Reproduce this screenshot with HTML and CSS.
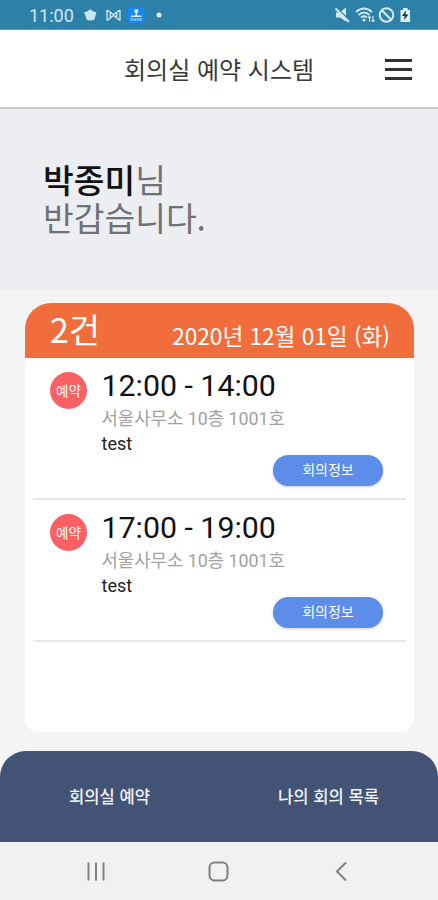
FILE: index.html
```html
<!DOCTYPE html>
<html lang="ko">
<head>
<meta charset="utf-8">
<title>회의실 예약 시스템</title>
<link rel="stylesheet" href="styles.css">
</head>
<body>
<div class="phone">
  <div class="status">
    <span class="clock">11:00</span>
    <svg class="status-left" width="80" height="18" viewBox="0 0 80 18">
      <path d="M7 3 L9.500 5 L13.500 6.500 L12.500 9.500 L11.500 13.500 Q7 15.500 3.500 13.500 L2.500 9.500 L1 6.500 L5 5Z" fill="#c9e6f1"/>
      <path d="M24 4 V14.500 M37 4 V14.500 M24 4 L30.500 8.500 L37 4 M24 14.500 L30.500 9.500 L37 14.500 M27.300 6.500 V12 M33.700 6.500 V12" fill="none" stroke="#c9e6f1" stroke-width="1.400"/>
      <rect x="45" y="1" width="16.500" height="16" rx="3" fill="#1688f5"/>
      <circle cx="53.300" cy="5" r="2.100" fill="#d8f0ff"/>
      <path d="M53.300 6 V9.500 M48 10.300 H58.500" stroke="#d8f0ff" stroke-width="1.500"/>
      <path d="M47.500 13.500 H59" stroke="#7cc4ff" stroke-width="2.500" stroke-dasharray="2.500 .5"/>
      <circle cx="76" cy="9" r="2.500" fill="#e2f2f8"/>
    </svg>
    <svg class="status-right" width="80" height="18" viewBox="0 0 80 18">
      <path d="M2 6.500 H5.500 L12 1.500 V15.500 L6 11.500 H2Z" fill="#d3eaf3"/>
      <path d="M2.500 1.500 L16 15" stroke="#2d80a7" stroke-width="1.500"/>
      <path d="M1.500 2.500 L15 16" stroke="#d3eaf3" stroke-width="1.900"/>
      <path d="M22 6 Q30 -1 38 6 M24.500 9 Q30 4 35.500 9 M27 11.500 Q30 9 33 11.500" fill="none" stroke="#d3eaf3" stroke-width="1.800"/>
      <circle cx="30" cy="14" r="1.500" fill="#d3eaf3"/>
      <path d="M35.500 16 V10.500 M34 12 L35.500 10.300 L37 12 M39 10 V15.500 M37.500 14 L39 15.700 L40.500 14" fill="none" stroke="#d3eaf3" stroke-width="1.100"/>
      <circle cx="52.500" cy="9" r="6.800" fill="none" stroke="#d3eaf3" stroke-width="2"/>
      <path d="M47.800 4.300 L57.200 13.700" stroke="#d3eaf3" stroke-width="2"/>
      <path d="M66.500 4 H69 V2 H73.500 V4 H76 V16 H66.500Z" fill="#dceff5"/>
      <path d="M72 4.500 L68 10 H70.700 L70 14 L74.500 8.500 H71.700Z" fill="#183642"/>
    </svg>
  </div>
  <header class="header">
    <h1 class="title">회의실 예약 시스템</h1>
    <div class="menu"><i></i><i></i><i></i></div>
  </header>
  <section class="greeting"><p><b>박종미</b>님</p><p>반갑습니다.</p></section>
  <main class="main">
    <div class="card">
      <div class="card-head"><span class="count">2건</span><span class="date">2020년 12월 01일 (화)</span></div>
      <article class="item">
        <span class="badge">예약</span>
        <div class="info">
          <div class="time">12:00 - 14:00</div>
          <div class="place">서울사무소 10층 1001호</div>
          <div class="subject">test</div>
          <button class="detail">회의정보</button>
        </div>
      </article>
      <article class="item">
        <span class="badge">예약</span>
        <div class="info">
          <div class="time">17:00 - 19:00</div>
          <div class="place">서울사무소 10층 1001호</div>
          <div class="subject">test</div>
          <button class="detail">회의정보</button>
        </div>
      </article>
    </div>
  </main>
  <nav class="tabs"><span>회의실 예약</span><span>나의 회의 목록</span></nav>
  <div class="navbar">
    <svg width="438" height="58" viewBox="0 0 438 58" fill="none" stroke="#7f7f7f" stroke-width="2">
      <path d="M88.500 20.500 V38.500 M96 20.500 V38.500 M103.500 20.500 V38.500"/>
      <rect x="209.500" y="20.500" width="18" height="18" rx="5"/>
      <path d="M346 20.500 L337 29.500 L346 38.500"/>
    </svg>
  </div>
</div>
</body>
</html>
```
FILE: styles.css
```css
* { box-sizing: border-box; margin: 0; padding: 0; }
body { background: #f4f4f4; font-family: Roboto, "Noto Sans CJK KR", sans-serif; }
.phone { display: flex; flex-direction: column; width: 438px; height: 900px; overflow: hidden; }
.status { display: flex; align-items: center; height: 30px; padding-left: 29px; background: #2d80a7; border-bottom: 1px solid #5a9aba; }
.clock { width: 53px; font-size: 18px; line-height: 30px; color: #cfe8f2; padding-top: 2px; }
.status-right { margin: 0 24px 0 auto; }
.status-left { margin-left: 1px; }
.header { display: flex; align-items: center; height: 79px; padding: 0 26px 0 124px; background: #fff; border-bottom: 2px solid #c9c9cb; }
.title { flex: 1; font: 400 24px/36px "Noto Sans CJK KR", sans-serif; color: #3a3a3a; white-space: nowrap; }
.menu { display: flex; flex-direction: column; gap: 6px; width: 27px; margin-top: 2px; }
.menu i { height: 3px; background: #333; }
.greeting { height: 182px; padding: 51px 0 0 43px; background: #edeef2; font: 400 33.400px/38px "Noto Sans CJK KR", sans-serif; color: #707174; }
.greeting b { font-weight: 500; color: #111; }
.main { flex: 1; padding: 12px 24px 0 25px; }
.card { height: 429px; background: #fff; border-radius: 26px 26px 14px 14px; overflow: hidden; }
.card-head { display: flex; justify-content: space-between; height: 55px; padding: 0 24px 0 25px; background: #f16e3c; color: #fff; font-family: "Noto Sans CJK KR", sans-serif; }
.count { font-size: 34px; line-height: 51px; }
.date { font-size: 22.700px; line-height: 66px; letter-spacing: -0.050px; }
.item { display: flex; height: 142px; margin: 0 8px; padding: 14px 23px 0 17px; border-bottom: 2px solid #e7e7e7; }
.badge { flex: none; width: 37px; height: 37px; border-radius: 50%; background: #fb6064; color: #fff; font: 400 13.500px/37px "Noto Sans CJK KR", sans-serif; text-align: center; }
.info { display: flex; flex: 1; flex-direction: column; margin-left: 14.500px; }
.time { font-size: 30.300px; line-height: 28px; color: #111; }
.place { margin-top: 6px; font-size: 17.800px; line-height: 26px; font-weight: 400; color: #a2a2a2; }
.subject { font-size: 18px; line-height: 24px; color: #222; }
.detail { align-self: flex-end; width: 110px; height: 31px; margin-top: -1px; padding-bottom: 2px; border: 0; border-radius: 16px; background: #5c8de9; box-shadow: 0 1px 3px #0003; color: #fff; font: 400 14px/29px "Noto Sans CJK KR", sans-serif; }
.tabs { display: flex; height: 91px; background: #435375; border-radius: 26px 26px 0 0; color: #eef1f6; font: 500 16.600px/90px "Noto Sans CJK KR", sans-serif; }
.tabs span { flex: 1; text-align: center; }
.navbar { height: 58px; background: #f1f1f1; }
.navbar svg { display: block; }
```
